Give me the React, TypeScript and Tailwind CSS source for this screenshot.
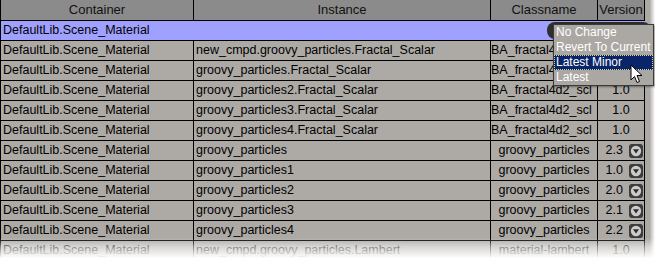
import React from "react";

type Row = {
  container: string;
  instance: string;
  classname: string;
  version: string;
  center?: boolean;
  pick?: boolean;
};

// versions of the first two rows sit under the open list, so they are left blank
const rows: Row[] = [
  { container: "DefaultLib.Scene_Material", instance: "new_cmpd.groovy_particles.Fractal_Scalar", classname: "BA_fractal4d2_scl", version: "" },
  { container: "DefaultLib.Scene_Material", instance: "groovy_particles.Fractal_Scalar", classname: "BA_fractal4d2_scl", version: "" },
  { container: "DefaultLib.Scene_Material", instance: "groovy_particles2.Fractal_Scalar", classname: "BA_fractal4d2_scl", version: "1.0" },
  { container: "DefaultLib.Scene_Material", instance: "groovy_particles3.Fractal_Scalar", classname: "BA_fractal4d2_scl", version: "1.0" },
  { container: "DefaultLib.Scene_Material", instance: "groovy_particles4.Fractal_Scalar", classname: "BA_fractal4d2_scl", version: "1.0" },
  { container: "DefaultLib.Scene_Material", instance: "groovy_particles", classname: "groovy_particles", version: "2.3", center: true, pick: true },
  { container: "DefaultLib.Scene_Material", instance: "groovy_particles1", classname: "groovy_particles", version: "1.0", center: true, pick: true },
  { container: "DefaultLib.Scene_Material", instance: "groovy_particles2", classname: "groovy_particles", version: "2.0", center: true, pick: true },
  { container: "DefaultLib.Scene_Material", instance: "groovy_particles3", classname: "groovy_particles", version: "2.1", center: true, pick: true },
  { container: "DefaultLib.Scene_Material", instance: "groovy_particles4", classname: "groovy_particles", version: "2.2", center: true, pick: true },
  { container: "DefaultLib.Scene_Material", instance: "new_cmpd.groovy_particles.Lambert", classname: "material-lambert", version: "1.0", center: true },
];

function PickIcon() {
  return (
    <svg width="14" height="14" viewBox="0 0 14 14" className="shrink-0">
      <rect x="0" y="0" width="14" height="14" rx="3" fill="#3c3c3c" />
      <circle cx="7" cy="7" r="5.2" fill="#cbcbcb" />
      <path d="M4 5.2 L10 5.2 L7 9.6 Z" fill="#2a2a2a" />
    </svg>
  );
}

function Cursor() {
  return (
    <svg width="14" height="20" viewBox="0 0 14 20">
      <path
        d="M1 1 L1 16 L4.5 12.5 L7 18.5 L9.5 17.5 L7 11.5 L12 11.5 Z"
        fill="#fff"
        stroke="#000"
        strokeWidth="1"
        strokeLinejoin="round"
      />
    </svg>
  );
}

export default function App() {
  return (
    <div
      className="relative w-[655px] h-[262px] overflow-hidden bg-white text-black"
      style={{ fontFamily: '"Liberation Sans", Arial, sans-serif' }}
    >
      <div className="flex">
        <div className="flex flex-col w-[645px] border-l border-black bg-[#adaaa6] text-[12.5px]">
          {/* header */}
          <div className="flex h-[21px] border-b border-black bg-[#8b8b8b] text-[#111] text-[13px]">
            <div className="w-[193px] border-r border-black flex items-center justify-center">Container</div>
            <div className="w-[297px] border-r border-black flex items-center justify-center">Instance</div>
            <div className="w-[107px] border-r border-black flex items-center justify-center">Classname</div>
            <div className="w-[47px] border-r border-black flex items-center justify-center">Version</div>
          </div>

          {/* selected row */}
          <div className="flex h-[20px] border-b border-black bg-[#a0a0ff] items-center pl-[2px]">
            DefaultLib.Scene_Material
          </div>

          {rows.map((r, i) => (
            <div key={i} className="flex h-[20px] border-b border-black">
              <div className="w-[193px] border-r border-black flex items-center pl-[2px] whitespace-nowrap overflow-hidden">
                {r.container}
              </div>
              <div className="w-[297px] border-r border-black flex items-center pl-[2px] whitespace-nowrap overflow-hidden">
                {r.instance}
              </div>
              <div
                className={
                  r.center
                    ? "w-[107px] border-r border-black flex items-center justify-center whitespace-nowrap overflow-hidden"
                    : "w-[107px] border-r border-black flex items-center whitespace-nowrap overflow-hidden"
                }
              >
                {r.classname}
              </div>
              <div
                className={
                  r.pick
                    ? "w-[47px] border-r border-black flex items-center justify-end gap-[6px] pr-[1px]"
                    : "w-[47px] border-r border-black flex items-center justify-center"
                }
              >
                <span>{r.version}</span>
                {r.pick && <PickIcon />}
              </div>
            </div>
          ))}
        </div>
        <div className="w-[10px] bg-[linear-gradient(to_right,#adaaa6_45%,#ffffff)]" />
      </div>

      {/* combobox behind the open list */}
      <div className="absolute left-[547px] top-[22px] w-[104px] h-[17px] rounded-[8px] bg-[#2e2e2e]" />

      {/* open version list */}
      <div className="absolute left-[553px] top-[24px] w-[101px] flex flex-col border border-[#3a3a3a] bg-[#aba7a3] text-[12px] text-white shadow-[1px_1px_2px_rgba(0,0,0,0.4)]">
        <div className="h-[15px] leading-[15px] px-[2px] whitespace-nowrap">No Change</div>
        <div className="h-[15px] leading-[15px] px-[2px] whitespace-nowrap">Revert To Current</div>
        <div className="h-[15px] leading-[13px] px-[1px] whitespace-nowrap bg-[#0a246a] border border-dotted border-[#d8d890]">
          Latest Minor
        </div>
        <div className="h-[15px] leading-[15px] px-[2px] whitespace-nowrap">Latest</div>
      </div>

      <div className="absolute left-[630px] top-[64px]">
        <Cursor />
      </div>

      {/* fade at the bottom */}
      <div className="absolute left-0 right-0 top-[238px] bottom-0 bg-[linear-gradient(to_bottom,rgba(255,255,255,0)_0%,rgba(255,255,255,0.5)_35%,#ffffff_85%)]" />
    </div>
  );
}
